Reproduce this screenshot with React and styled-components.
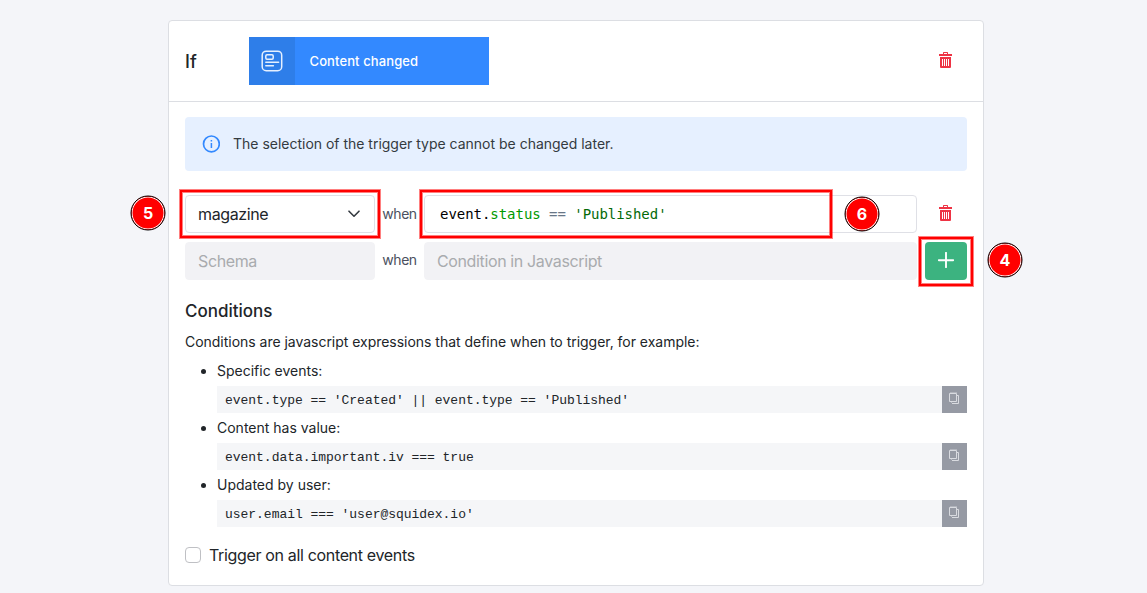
import React from 'react';
import styled, { createGlobalStyle } from 'styled-components';

const GlobalStyle = createGlobalStyle`
  *, *::before, *::after { box-sizing: border-box; }
  html, body { margin: 0; }
  body {
    height: 593px;
    overflow: hidden;
    background: #f4f5f9;
    color: #212529;
    font-family: Inter, "Liberation Sans", sans-serif;
    font-size: 14px;
    line-height: 21px;
  }
`;

const Page = styled.main`
  position: relative;
  height: 593px;
  padding: 20px 163px 7px 168px;
`;

const Card = styled.section`
  height: 566px;
  background: #fff;
  border: 1px solid #dcdee3;
  border-radius: 4px;
`;

const CardHeader = styled.header`
  display: flex;
  align-items: center;
  height: 81px;
  padding: 0 16px;
  border-bottom: 1px solid #dcdee3;
`;

const HeaderLabel = styled.h3`
  width: 64px;
  margin: 0;
  font-size: 18px;
  font-weight: 500;
`;

const TriggerType = styled.div`
  display: flex;
  width: 240px;
  height: 48px;
  color: #fff;
  background: #3389ff;
`;

const TriggerIcon = styled.div`
  display: flex;
  align-items: center;
  justify-content: center;
  width: 46px;
  background: #2e7ee9;
`;

const TriggerName = styled.span`
  padding-left: 14.5px;
  font-size: 13px;
  font-weight: 500;
  line-height: 48px;
  letter-spacing: 0.11px;
`;

const IconButton = styled.button`
  display: flex;
  align-items: center;
  justify-content: center;
  width: 42px;
  height: 38px;
  margin-left: ${(p) => (p.$push ? 'auto' : '8px')};
  padding: ${(p) => (p.$success ? '0 0 2px' : '0 1px 2px 0')};
  color: ${(p) => (p.$success ? '#fff' : '#ee3344')};
  background: ${(p) => (p.$success ? '#3cb380' : 'transparent')};
  border: 0;
  border-radius: 4px;
`;

const CardBody = styled.div`
  padding: 15px 16px;
`;

const Alert = styled.div`
  display: flex;
  align-items: center;
  gap: 13px;
  height: 54px;
  margin-bottom: 24px;
  padding: 0 17px 1px;
  color: #343a40;
  background: #e6f0ff;
  border-radius: 4px;
`;

const AlertText = styled.span`
  letter-spacing: -0.01px;
`;

const RuleRow = styled.div`
  display: flex;
  align-items: center;
  height: 38px;
  margin-bottom: 9px;
`;

const Field = styled.div`
  display: flex;
  align-items: center;
  justify-content: space-between;
  width: ${(p) => p.$width}px;
  height: 38px;
  padding: 0 14px 0 12px;
  font-size: 16px;
  letter-spacing: -0.37px;
  color: ${(p) => (p.$disabled ? '#a9abae' : '#212529')};
  background: ${(p) => (p.$disabled ? '#f2f2f5' : '#fff')};
  border: 1px solid ${(p) => (p.$disabled ? '#f2f2f5' : '#dfe0e6')};
  border-radius: 4px;
`;

const Code = styled.code`
  padding-left: 3px;
  color: #000;
  font-family: "DejaVu Sans Mono", monospace;
  font-size: 14px;
  white-space: pre;
  letter-spacing: -0.04px;
`;

const Token = styled.span`
  color: ${(p) => p.$color};
`;

const When = styled.span`
  width: 49px;
  padding-bottom: ${(p) => (p.$raised ? '3px' : '1px')};
  color: #4b5060;
  text-align: center;
  letter-spacing: -0.45px;
`;

const SectionTitle = styled.h4`
  margin: 20px 0 9px;
  font-size: 17px;
  font-weight: 500;
  line-height: 22px;
  letter-spacing: -0.02px;
`;

const Paragraph = styled.p`
  margin: 0 0 8px;
  letter-spacing: -0.025px;
`;

const Examples = styled.ul`
  margin: 0;
  padding-left: 32px;
`;

const Example = styled.li`
  height: 57px;
`;

const Snippet = styled.div`
  display: flex;
  justify-content: space-between;
  height: 27px;
  margin-top: 5px;
  padding-left: 8px;
  background: #f5f6f8;
  font-family: "Liberation Mono", monospace;
  font-size: 13px;
  line-height: 30px;
  letter-spacing: -0.03px;
  white-space: pre;
`;

const CopyButton = styled.button`
  display: flex;
  justify-content: center;
  width: 25px;
  height: 27px;
  padding: 6px 0 0;
  color: #d9dbe0;
  background: #969aa4;
  border: 0;
`;

const CheckLabel = styled.label`
  display: flex;
  align-items: center;
  gap: 8px;
  margin-top: 14px;
  font-size: 16px;
  letter-spacing: -0.34px;
`;

const Checkbox = styled.span`
  width: 16px;
  height: 16px;
  margin-bottom: 1px;
  background: #fff;
  border: 1px solid #bfc0c4;
  border-radius: 4px;
`;

const Highlight = styled.div`
  position: absolute;
  left: ${(p) => p.$x}px;
  top: ${(p) => p.$y}px;
  width: ${(p) => p.$w}px;
  height: ${(p) => p.$h}px;
  border: 2px solid #f00;
  box-shadow: 0 0 0 1px rgba(255, 0, 0, 0.5), inset 0 0 0 1px rgba(255, 0, 0, 0.5);
`;

const Marker = styled.div`
  position: absolute;
  left: ${(p) => p.$x}px;
  top: ${(p) => p.$y}px;
  width: 35px;
  height: 35px;
  color: #fff;
  background: #f00;
  border: 1px solid #000;
  border-radius: 50%;
  box-shadow: inset 0 0 0 1px #fff;
  font-size: 16px;
  font-weight: 700;
  line-height: 33px;
  text-align: center;
  transform: translate(-0.5px, -0.5px);
`;

const ContentIcon = () => (
  <svg width="22" height="22" viewBox="0 0 22 22" fill="none" stroke="#e5f0ff" strokeWidth="1.5" strokeLinecap="round">
    <rect x="1.2" y="1.2" width="19.5" height="19.5" rx="4" />
    <rect x="4.8" y="4.8" width="7.4" height="4.4" rx="1.2" />
    <path d="M4.8 12.3H17.6M4.8 15.8H12.4" />
  </svg>
);

const TrashIcon = () => (
  <svg width="13" height="16" viewBox="0 0 13 16" fill="currentColor">
    <path fillRule="evenodd" d="M4 2V.7Q4 0 4.7 0h3.6Q9 0 9 .7V2h4v2H0V2zM5 1v1h3V1zM1 5h11v10q0 1-1 1H2q-1 0-1-1zM3 7v7h1V7zM5 7v7h1V7zM7 7v7h1V7zM9 7v7h1V7z" />
  </svg>
);

const InfoIcon = () => (
  <svg width="18" height="18" viewBox="0 0 18 18" fill="none" stroke="#3389ff" strokeWidth="1.7">
    <circle cx="9.4" cy="8.9" r="7.9" />
    <path d="M9.4 8v5M9.4 5v1.5" strokeWidth="1.5" />
  </svg>
);

const ChevronIcon = () => (
  <svg width="12" height="8" viewBox="0 0 12 8" fill="none" stroke="#343a40" strokeWidth="1.6" strokeLinecap="round" strokeLinejoin="round">
    <path d="M1 1.2l5 5 5-5" />
  </svg>
);

const PlusIcon = () => (
  <svg width="16" height="16" viewBox="0 0 16 16" stroke="#fff" strokeWidth="1.9" strokeLinecap="round">
    <path d="M8 .8v14.4M.8 8.2h14.4" />
  </svg>
);

const CopyIcon = () => (
  <svg width="11" height="12" viewBox="0 0 11 12" fill="none" stroke="currentColor">
    <path d="M1 .5h7" strokeOpacity=".4" />
    <path d="M.5 1.5h7v8h-7z" />
    <path d="M8 3.5h1.5v8h-6.5" />
    <path d="M2.5 10v1" strokeOpacity=".5" />
  </svg>
);

const examples = [
  ['Specific events:', "event.type == 'Created' || event.type == 'Published'"],
  ['Content has value:', 'event.data.important.iv === true'],
  ['Updated by user:', "user.email === 'user@squidex.io'"],
];

export default function App() {
  return (
    <Page>
      <GlobalStyle />
      <Card>
        <CardHeader>
          <HeaderLabel>If</HeaderLabel>
          <TriggerType>
            <TriggerIcon><ContentIcon /></TriggerIcon>
            <TriggerName>Content changed</TriggerName>
          </TriggerType>
          <IconButton $push aria-label="Delete trigger"><TrashIcon /></IconButton>
        </CardHeader>
        <CardBody>
          <Alert>
            <InfoIcon />
            <AlertText>The selection of the trigger type cannot be changed later.</AlertText>
          </Alert>
          <RuleRow>
            <Field $width={190}>magazine<ChevronIcon /></Field>
            <When>when</When>
            <Field $width={493}>
              <Code>
                event.<Token $color="#009a00">status</Token> <Token $color="#687687">==</Token> <Token $color="#036a07">'Published'</Token>
              </Code>
            </Field>
            <IconButton aria-label="Delete schema"><TrashIcon /></IconButton>
          </RuleRow>
          <RuleRow>
            <Field $width={190} $disabled>Schema</Field>
            <When $raised>when</When>
            <Field $width={493} $disabled>Condition in Javascript</Field>
            <IconButton $success aria-label="Add schema"><PlusIcon /></IconButton>
          </RuleRow>
          <SectionTitle>Conditions</SectionTitle>
          <Paragraph>Conditions are javascript expressions that define when to trigger, for example:</Paragraph>
          <Examples>
            {examples.map(([title, code]) => (
              <Example key={title}>
                {title}
                <Snippet>
                  {code}
                  <CopyButton aria-label="Copy"><CopyIcon /></CopyButton>
                </Snippet>
              </Example>
            ))}
          </Examples>
          <CheckLabel><Checkbox />Trigger on all content events</CheckLabel>
        </CardBody>
      </Card>
      <Highlight $x={180} $y={190} $w={200} $h={48} />
      <Highlight $x={420} $y={190} $w={412} $h={48} />
      <Highlight $x={919} $y={237} $w={54} $h={49} />
      <Marker $x={131} $y={196}>5</Marker>
      <Marker $x={845} $y={197}>6</Marker>
      <Marker $x={988} $y={243}>4</Marker>
    </Page>
  );
}
